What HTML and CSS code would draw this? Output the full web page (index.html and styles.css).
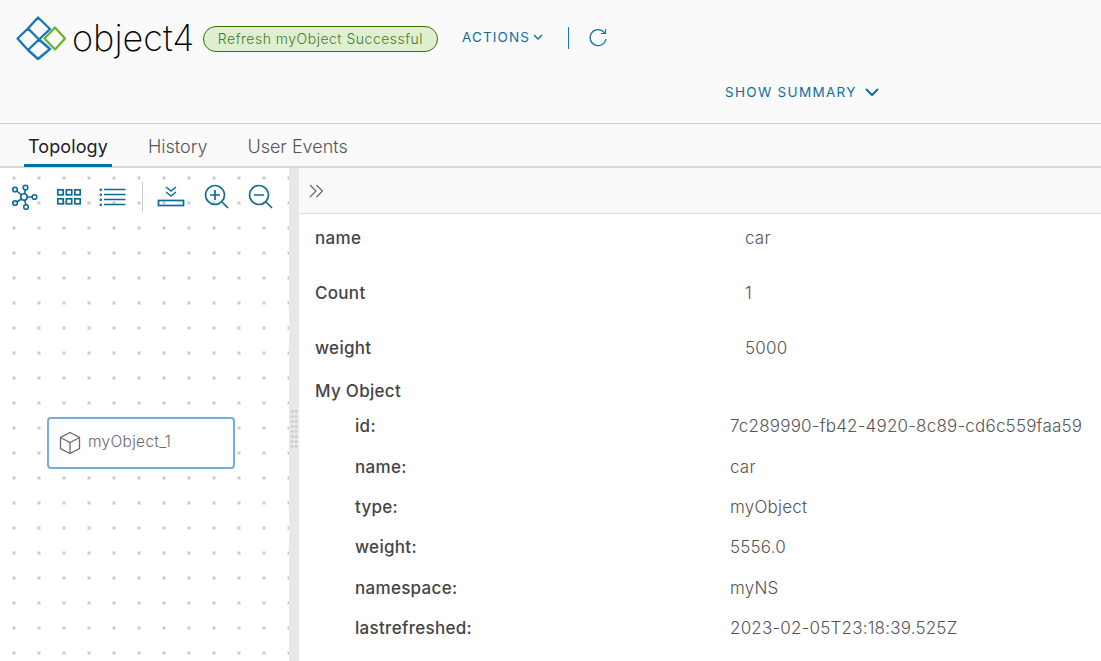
FILE: index.html
```html
<!DOCTYPE html>
<html lang="en">
<head>
    <meta charset="UTF-8">
    <title>object4</title>
    <link rel="stylesheet" href="styles.css">
</head>
<body>
    <header class="header">
        <div class="title-row">
            <svg class="logo" width="50" height="44" viewBox="16 16 50 44" fill="none" stroke-width="2.4" stroke-linejoin="round">
                <path stroke="#1a76b8" d="M38 17.5L50 29 39 39.5 28 28.500zM28 28.500L39 39.500 28 50 17.500 38.500zM39 39.500L50 49 38 59 28 50z"/>
                <path stroke="#6cb52d" d="M55 27.500L65 38.500 55 49.500 44.500 38.500z"/>
            </svg>
            <span class="app-name">object4</span>
            <span class="badge">Refresh myObject Successful</span>
            <button class="actions">ACTIONS
                <svg width="10" height="6" viewBox="0 0 10 6" fill="none" stroke="#0f6f9e" stroke-width="1.4"><path d="M1 1l4 4 4-4"/></svg>
            </button>
            <span class="divider"></span>
            <svg class="refresh" width="20" height="20" viewBox="0 0 20 20" fill="none" stroke="#1b7198" stroke-width="1.2">
                <path d="M16.500 4.800A8 8 0 1 0 18 11"/>
                <path d="M17.500 1v4.500H13"/>
            </svg>
        </div>
        <button class="show-summary">SHOW SUMMARY
            <svg width="14" height="9" viewBox="0 0 14 9" fill="none" stroke="#0f6f9e" stroke-width="2"><path d="M1 1l6 6 6-6"/></svg>
        </button>
    </header>

    <nav class="tabs">
        <a class="tab active">Topology</a>
        <a class="tab">History</a>
        <a class="tab">User Events</a>
    </nav>

    <main class="content">
        <section class="canvas">
            <div class="toolbar">
                <svg width="28" height="28" viewBox="0 0 28 28" fill="none" stroke="#0f6a96" stroke-width="1.600">
                    <circle cx="14" cy="14" r="3.200"/>
                    <circle cx="15.500" cy="4.500" r="2.300"/><circle cx="5" cy="6.500" r="2.300"/>
                    <circle cx="24.500" cy="14" r="2.300"/><circle cx="5" cy="20" r="2.300"/><circle cx="16" cy="24" r="2.300"/>
                    <path d="M14.500 11L15.200 6.800M11.500 12L6.800 8M17.200 14H22.200M11.500 16L7 18.800M14.800 17L15.800 21.800"/>
                </svg>
                <svg class="tool-grid" width="26" height="18" viewBox="0 0 26 18" fill="none" stroke="#0f6a96" stroke-width="1.700">
                    <rect x="1.800" y="1.800" width="5.400" height="5"/><rect x="10.300" y="1.800" width="5.400" height="5"/><rect x="18.800" y="1.800" width="5.400" height="5"/>
                    <rect x="1.800" y="10.800" width="5.400" height="5"/><rect x="10.300" y="10.800" width="5.400" height="5"/><rect x="18.800" y="10.800" width="5.400" height="5"/>
                </svg>
                <svg width="27" height="18" viewBox="0 0 27 18" fill="none" stroke="#0f6a96" stroke-width="1.500">
                    <path d="M5 1.500H26.500M5 6.500H26.500M5 11.500H26.500M5 16.500H26.500"/>
                    <path stroke-width="1" d="M1 1h1.500v1.500h-1.500zM1 6h1.500v1.500h-1.500zM1 11h1.500v1.500h-1.500zM1 16h1.500v1.500h-1.500z"/>
                </svg>
                <span class="tool-sep"></span>
                <svg class="tool-import" width="28" height="26" viewBox="0 0 28 26" fill="none" stroke="#0f6a96" stroke-width="1.400">
                    <path d="M9 3l5 4 5-4M9 8l5 4 5-4"/>
                    <rect x="1.500" y="16.500" width="25" height="5" stroke-width="1.700"/>
                </svg>
                <svg width="26" height="26" viewBox="0 0 26 26" fill="none" stroke="#0f6a96" stroke-width="1.700">
                    <circle cx="11" cy="11" r="9.500"/>
                    <path d="M11 6v10M6 11h10M18 18l6 6"/>
                </svg>
                <svg class="tool-zoom-out" width="26" height="26" viewBox="0 0 26 26" fill="none" stroke="#0f6a96" stroke-width="1.700">
                    <circle cx="11" cy="11" r="9.500"/>
                    <path d="M6 11h10M18 18l6 6"/>
                </svg>
            </div>
            <div class="node">
                <svg width="22" height="24" viewBox="0 0 22 24" fill="none" stroke="#6b6b6b" stroke-width="1.300">
                    <path d="M11 1.500l9.500 5v11l-9.500 5-9.500-5v-11zM1.500 6.500l9.500 5 9.500-5M11 11.500v11"/>
                </svg>
                <span class="node-label">myObject_1</span>
            </div>
        </section>

        <div class="splitter"><span class="grip"></span></div>

        <section class="details">
            <div class="details-bar">
                <svg width="16" height="14" viewBox="0 0 16 14" fill="none" stroke="#666" stroke-width="1.200"><path d="M1 1l6 6-6 6M7.500 1l6 6-6 6"/></svg>
            </div>
            <div class="top-rows">
                <div class="row"><span class="key">name</span><span class="val">car</span></div>
                <div class="row"><span class="key">Count</span><span class="val">1</span></div>
                <div class="row"><span class="key">weight</span><span class="val">5000</span></div>
            </div>
            <div class="group-title">My Object</div>
            <div class="nested">
                <div class="row"><span class="key">id:</span><span class="val">7c289990-fb42-4920-8c89-cd6c559faa59</span></div>
                <div class="row"><span class="key">name:</span><span class="val">car</span></div>
                <div class="row"><span class="key">type:</span><span class="val">myObject</span></div>
                <div class="row"><span class="key">weight:</span><span class="val">5556.0</span></div>
                <div class="row"><span class="key">namespace:</span><span class="val">myNS</span></div>
                <div class="row"><span class="key">lastrefreshed:</span><span class="val">2023-02-05T23:18:39.525Z</span></div>
            </div>
        </section>
    </main>
</body>
</html>
```

FILE: styles.css
```css
* {
    box-sizing: border-box;
}
html, body {
    height: 100%;
}
body {
    margin: 0;
    height: 661px;
    overflow: hidden;
    display: flex;
    flex-direction: column;
    font-family: Inter, "Noto Sans", Arial, sans-serif;
    color: #565656;
    background-color: #fff;
}
button {
    border: none;
    background: none;
    padding: 0;
    font-family: inherit;
    cursor: pointer;
}

.header {
    height: 124px;
    flex: none;
    background-color: #fafafa;
    border-bottom: 1px solid #ccc;
}
.title-row {
    display: flex;
    align-items: center;
    height: 44px;
    margin-top: 16px;
    padding-left: 16px;
}
.logo {
    flex: none;
}
.app-name {
    width: 130px;
    margin-left: 7px;
    font-size: 36px;
    font-weight: 200;
    color: #000;
    text-indent: -1px;
}
.badge {
    display: flex;
    align-items: center;
    justify-content: center;
    width: 235px;
    height: 26px;
    margin-top: 1px;
    border: 1px solid #3b7200;
    border-radius: 13px;
    background-color: #dff0d0;
    color: #4b7a2d;
    font-size: 14px;
    font-weight: 300;
    letter-spacing: 0.500px;
}
.actions {
    display: flex;
    align-items: center;
    gap: 3px;
    height: 20px;
    margin: -2px 0 0 24px;
    color: #0f6f9e;
    font-size: 13.500px;
    letter-spacing: 1.100px;
}
.divider {
    width: 1px;
    height: 22px;
    margin-left: 25px;
    background-color: #0f79b0;
}
.refresh {
    margin-left: 19px;
}
.show-summary {
    display: flex;
    align-items: center;
    gap: 8px;
    margin: 24px 0 0 725px;
    color: #0f6f9e;
    font-size: 13.500px;
    letter-spacing: 1.300px;
}

.tabs {
    display: flex;
    gap: 32px;
    height: 44px;
    flex: none;
    padding-left: 24px;
    background-color: #fafafa;
    border-bottom: 2px solid #d8d8d8;
}
.tab {
    height: 43px;
    padding: 12px 4px 0;
    font-size: 18px;
    font-weight: 300;
    color: #555;
}
.tab.active {
    color: #222;
    font-weight: 400;
    letter-spacing: 0.100px;
    border-bottom: 3px solid #0072a3;
}

.content {
    flex: 1;
    display: flex;
    min-height: 0;
}
.canvas {
    position: relative;
    width: 289px;
    flex: none;
    background-color: #fff;
    background-image: radial-gradient(circle, #c9c9c9 1.400px, transparent 1.700px);
    background-size: 25px 25px;
    background-position: 1.500px -2.500px;
}
.toolbar {
    display: flex;
    align-items: center;
    height: 58px;
    padding-left: 10px;
    gap: 17px;
}
.tool-grid {
    margin-left: 1px;
}
.tool-sep {
    width: 1px;
    height: 30px;
    margin: 0 -3px 0 -1px;
    background-color: #ccc;
}
.tool-import {
    margin-right: 2px;
}
.tool-zoom-out {
    margin-left: 1px;
}
/* node sits on the free canvas */
.node {
    position: absolute;
    left: 47px;
    top: 249px;
    width: 188px;
    height: 52px;
    display: flex;
    align-items: center;
    gap: 7px;
    padding-left: 10px;
    background-color: #fff;
    border: 2px solid #75aede;
    border-radius: 4px;
    color: #6b6b6b;
}
.node-label {
    margin-bottom: 4px;
    font-size: 15.500px;
    font-weight: 300;
    letter-spacing: 0.300px;
}

.splitter {
    display: flex;
    align-items: center;
    justify-content: center;
    width: 10px;
    flex: none;
    background-color: #e8e8e8;
}
.grip {
    width: 8px;
    height: 40px;
    margin-top: 29px;
    background-image: radial-gradient(circle, #cfcfcf 1.400px, transparent 1.700px);
    background-size: 4px 5px;
}

.details {
    flex: 1;
    min-width: 0;
    background-color: #fff;
}
.details-bar {
    display: flex;
    align-items: center;
    height: 46px;
    padding-left: 10px;
    background-color: #fafafa;
    border-bottom: 1px solid #ddd;
}
.row {
    display: flex;
    align-items: center;
}
.key {
    font-size: 17px;
    font-weight: 500;
    letter-spacing: 0.300px;
    color: #444;
}
.val {
    font-size: 17px;
    font-weight: 300;
    letter-spacing: 0.200px;
    color: #555;
}
.top-rows {
    margin-top: -4px;
    padding-left: 16px;
}
.top-rows .row {
    height: 55px;
}
.top-rows .key {
    width: 430px;
}
.group-title {
    margin: 4px 0 0 16px;
    height: 24px;
    line-height: 24px;
    font-size: 17px;
    font-weight: 500;
    letter-spacing: 0.300px;
    color: #444;
}
.nested {
    padding: 3px 0 0 56px;
}
.nested .row {
    height: 40.400px;
}
.nested .key {
    width: 375px;
}
```
